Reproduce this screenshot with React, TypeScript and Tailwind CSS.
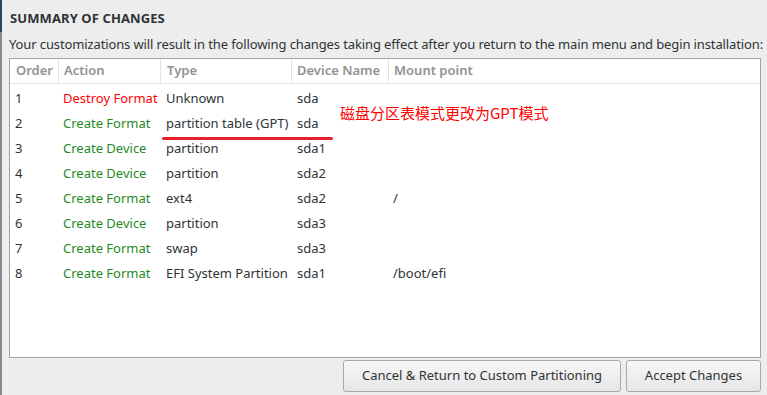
import React from 'react';

const rows = [
  { order: '1', action: 'Destroy Format', destroy: true, type: 'Unknown', device: 'sda', mount: '' },
  { order: '2', action: 'Create Format', type: 'partition table (GPT)', device: 'sda', mount: '' },
  { order: '3', action: 'Create Device', type: 'partition', device: 'sda1', mount: '' },
  { order: '4', action: 'Create Device', type: 'partition', device: 'sda2', mount: '' },
  { order: '5', action: 'Create Format', type: 'ext4', device: 'sda2', mount: '/' },
  { order: '6', action: 'Create Device', type: 'partition', device: 'sda3', mount: '' },
  { order: '7', action: 'Create Format', type: 'swap', device: 'sda3', mount: '' },
  { order: '8', action: 'Create Format', type: 'EFI System Partition', device: 'sda1', mount: '/boot/efi' },
];

const cols = 'grid grid-cols-[48px_1px_101px_1px_130px_1px_96px_1px_1fr]';

export default function App() {
  return (
    <div
      className="relative w-[767px] h-[395px] bg-[#ededed] text-[#2e3436] overflow-hidden flex"
      style={{ fontFamily: '"Noto Sans", "Noto Sans CJK SC", sans-serif' }}
    >
      {/* window edge */}
      <div className="w-[2px] flex flex-col shrink-0">
        <div className="h-[32px] bg-[#2c4363]" />
        <div className="flex-1 bg-[#8a8a8a]" />
      </div>

      <div className="flex-1 min-w-0 flex flex-col pl-[7px] pr-[6px]">
        <h2 className="mt-[10px] ml-[1px] h-[16px] text-[13px] leading-[16px] font-bold tracking-[0.1px]">
          SUMMARY OF CHANGES
        </h2>
        <p className="mt-[10px] h-[16px] text-[13px] leading-[16px] tracking-[-0.12px] whitespace-nowrap">
          Your customizations will result in the following changes taking effect after you return to the main menu and begin installation:
        </p>

        {/* table */}
        <div className="mt-[6px] h-[300px] bg-white border border-[#a3a3a3] flex flex-col">
          <div className={`${cols} h-[25px] border-b border-[#e4e4e4] text-[13px] font-semibold text-[#929292] items-center`}>
            <span className="pl-[6px]">Order</span>
            <span className="h-full bg-[#e4e4e4]" />
            <span className="pl-[5px]">Action</span>
            <span className="h-full bg-[#e4e4e4]" />
            <span className="pl-[6px]">Type</span>
            <span className="h-full bg-[#e4e4e4]" />
            <span className="pl-[5px]">Device Name</span>
            <span className="h-full bg-[#e4e4e4]" />
            <span className="pl-[5px]">Mount point</span>
          </div>
          <div className="pt-[2px]">
            {rows.map((r) => (
              <div key={r.order} className={`${cols} h-[25px] items-center text-[13px] whitespace-nowrap`}>
                <span className="pl-[5px]">{r.order}</span>
                <span />
                <span className={`pl-[4px] ${r.destroy ? 'text-[#ff0000]' : 'text-[#1f8a1f]'}`}>{r.action}</span>
                <span />
                <span className="pl-[5px]">{r.type}</span>
                <span />
                <span className="pl-[5px]">{r.device}</span>
                <span />
                <span className="pl-[4px]">{r.mount}</span>
              </div>
            ))}
          </div>
        </div>

        {/* buttons */}
        <div className="mt-[2px] flex justify-end gap-[5px]">
          <button className="w-[278px] h-[32px] rounded-[3px] border border-[#a8a8a8] bg-gradient-to-b from-[#f7f7f7] to-[#e6e6e6] text-[13px] text-[#2e3436]">
            Cancel &amp; Return to Custom Partitioning
          </button>
          <button className="w-[135px] h-[32px] rounded-[3px] border border-[#a8a8a8] bg-gradient-to-b from-[#f7f7f7] to-[#e6e6e6] text-[13px] text-[#2e3436]">
            Accept Changes
          </button>
        </div>
      </div>

      {/* annotation overlay */}
      <div
        className="absolute left-[340px] top-[103px] text-[15px] leading-[20px] text-[#ff0000] whitespace-nowrap"
        style={{ fontFamily: '"Noto Sans CJK SC", "Noto Sans", sans-serif' }}
      >
        磁盘分区表模式更改为GPT模式
      </div>
      <div className="absolute left-[162px] top-[137px] w-[171px] h-[3px] rounded-full bg-[#e5202a]" />
    </div>
  );
}
